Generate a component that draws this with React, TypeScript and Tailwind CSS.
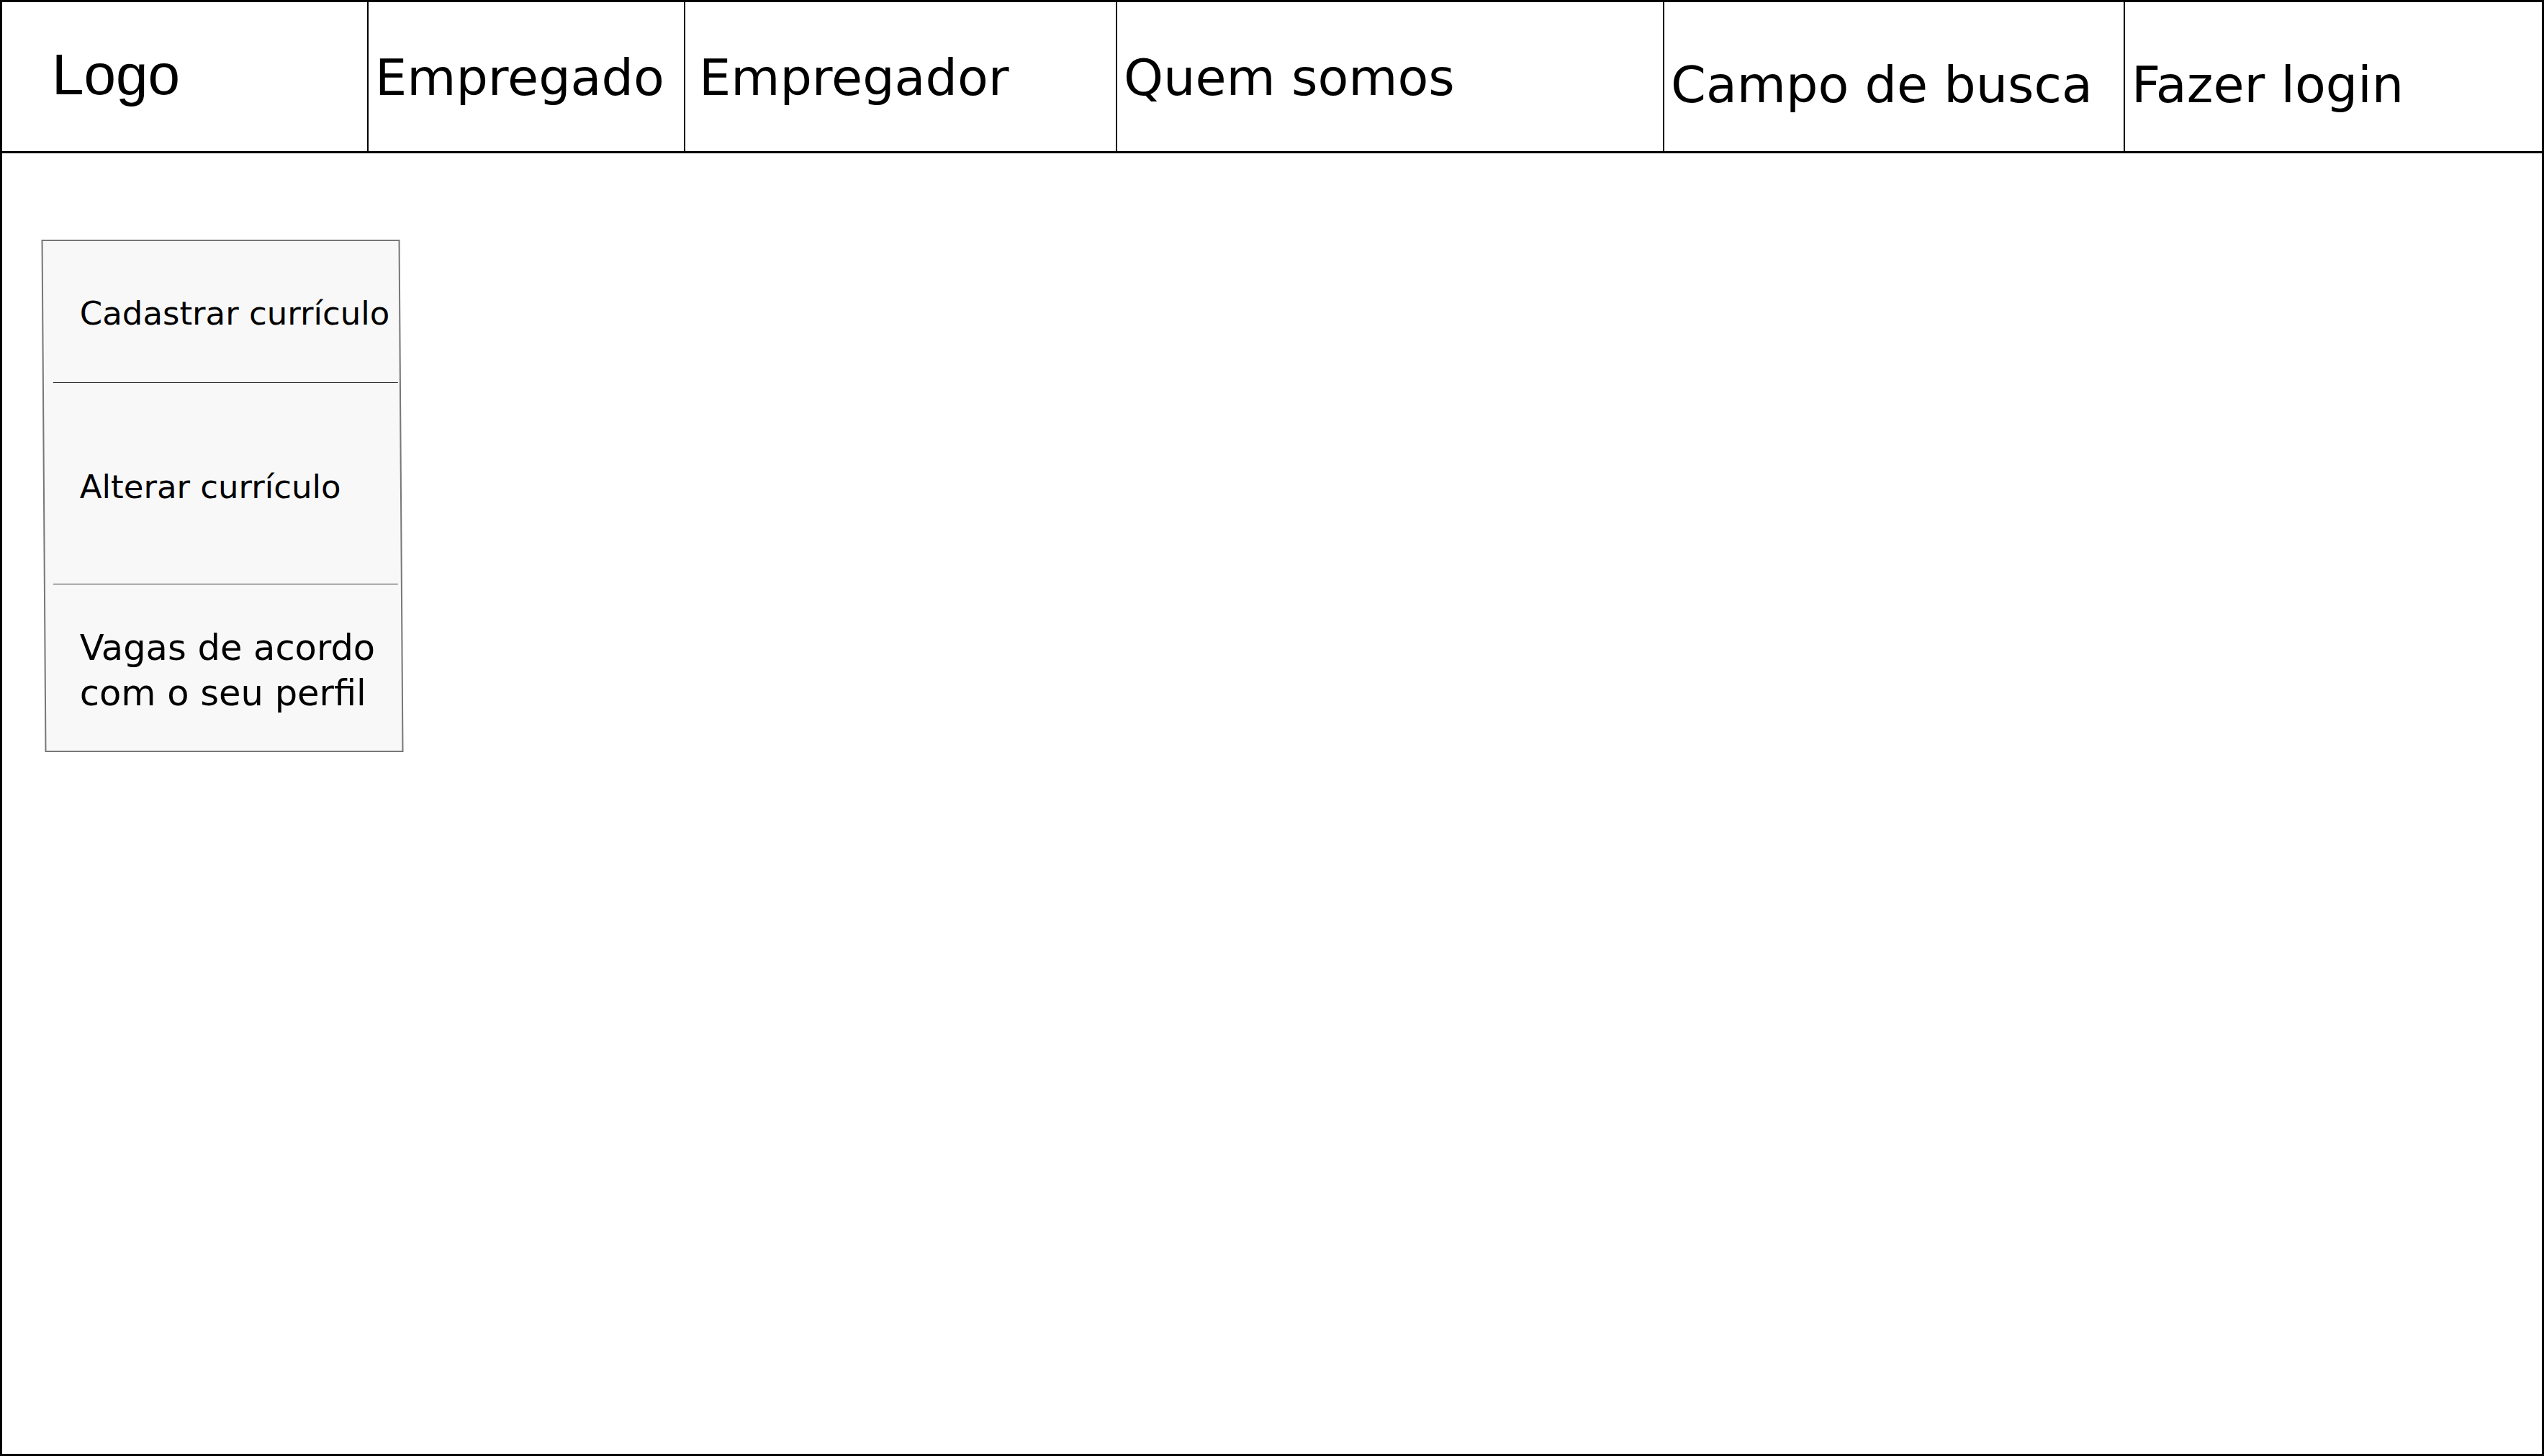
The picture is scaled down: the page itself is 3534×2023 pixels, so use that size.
const navItems = [
  { label: 'Empregado', width: 'w-[440px]', pad: 'pl-[9px] pt-[64px]' },
  { label: 'Empregador', width: 'w-[600px]', pad: 'pl-[19px] pt-[64px]' },
  { label: 'Quem somos', width: 'w-[760px]', pad: 'pl-[9px] pt-[64px]' },
  { label: 'Campo de busca', width: 'w-[640px]', pad: 'pl-[9px] pt-[74px]' },
];

export default function App() {
  return (
    <div className="h-screen w-full box-border border-[3px] border-black bg-white flex flex-col text-black">
      {/* top bar */}
      <header className="flex h-[210px] shrink-0 border-b-[3px] border-black">
        <div className="w-[509px] shrink-0 border-r-2 border-black pl-[69px] pt-[56px]">
          <span className="text-[80px] leading-[90px] font-['Liberation_Sans',Arial,sans-serif]">Logo</span>
        </div>
        {navItems.map((item) => (
          <div
            key={item.label}
            className={`${item.width} shrink-0 border-r-2 border-black ${item.pad}`}
          >
            <span className="text-[70px] leading-[82px] whitespace-nowrap font-['DejaVu_Sans',sans-serif]">
              {item.label}
            </span>
          </div>
        ))}
        <div className="flex-1 pl-[9px] pt-[74px]">
          <span className="text-[70px] leading-[82px] whitespace-nowrap font-['DejaVu_Sans',sans-serif]">Fazer login</span>
        </div>
      </header>

      <main className="flex-1">
        {/* side menu, drawn slightly askew like the wireframe */}
        <div className="ml-[57px] mt-[120px] w-[498px] h-[712px] box-border border-2 border-[#777] bg-[#f8f8f8] skew-x-[0.4deg]">
          <div className="-skew-x-[0.4deg] flex flex-col font-['DejaVu_Sans',sans-serif]">
            <div className="h-[196px] pt-[75px] pl-[49px] text-[45px] leading-[52px] whitespace-nowrap">
              Cadastrar currículo
            </div>
            <div className="h-px ml-[12px] mr-[3px] bg-[#333]" />
            <div className="h-[279px] pt-[119px] pl-[49px] text-[45px] leading-[52px] whitespace-nowrap">
              Alterar currículo
            </div>
            <div className="h-px ml-[12px] mr-[3px] bg-[#333]" />
            <div className="pt-[57px] pl-[49px] text-[49.5px] leading-[63px]">
              Vagas de acordo
              <br />
              com o seu perfil
            </div>
          </div>
        </div>
      </main>
    </div>
  );
}
